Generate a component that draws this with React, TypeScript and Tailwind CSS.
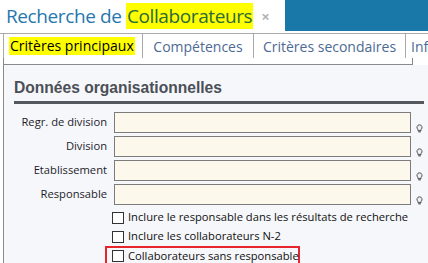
import React from 'react';

const Bulb = () => (
  <svg width="7" height="9" viewBox="0 0 7 9" className="shrink-0">
    <path d="M3.5 0.8a2.6 2.6 0 0 0-1.6 4.6v1.2h3.2V5.4A2.6 2.6 0 0 0 3.5 0.8z" fill="#f0f0f0" stroke="#555" strokeWidth="1" />
    <rect x="2.2" y="7.2" width="2.6" height="1.2" fill="#555" />
  </svg>
);

const fields = ['Regr. de division', 'Division', 'Etablissement', 'Responsable'];

const Field = ({ label }: { label: string }) => (
  <div className="flex items-center h-[21px]">
    <div className="w-[106px] text-right text-[11.2px] text-[#1d1d2b] whitespace-nowrap">{label}</div>
    <div className="ml-[7px] w-[297px] h-[21px] bg-[#fdf8ec] border border-[#7c7c7c]" />
    <div className="ml-[5px] self-end">
      <Bulb />
    </div>
  </div>
);

const Check = ({ label, boxed }: { label: string; boxed?: boolean }) => (
  <div
    className={
      boxed
        ? 'flex items-center gap-[4px] h-[20px] ml-[104px] w-[195px] pl-[5px] border-2 border-[#e8242c]'
        : 'flex items-center gap-[4px] h-[19px] ml-[111px]'
    }
  >
    <div className="w-[12px] h-[12px] bg-white border border-[#333] shrink-0" />
    <span className="text-[11.2px] text-[#111] whitespace-nowrap">{label}</span>
  </div>
);

export default function App() {
  return (
    <div className="w-[428px] h-[263px] overflow-hidden bg-white flex flex-col" style={{ fontFamily: '"Open Sans", "Noto Sans", sans-serif' }}>
      <div className="flex h-[33px] shrink-0">
        <div className="w-[285px] shrink-0 flex items-center pl-[6px]">
          <span className="text-[19px] leading-[27px] text-[#2577ad] tracking-[-0.4px]">
            Recherche de <span className="bg-[#ffff00] text-[#2b6a3a] px-[1px]">Collaborateurs</span>
          </span>
          <span className="ml-[8px] text-[15px] text-[#b5b5b5] font-bold">×</span>
        </div>
        <div className="flex-1 h-[31px] bg-[#1978a8]" />
      </div>
      <div className="flex h-[25px] shrink-0 border-t border-[#a9a9a9] overflow-hidden">
        <div className="w-[140px] shrink-0 ml-[3px] border-l border-r border-[#a9a9a9] flex items-center pl-[5px]">
          <span className="bg-[#ffff00] text-[14px] text-black leading-[18px] px-[1px]">Critères principaux</span>
        </div>
        <div className="w-[111px] shrink-0 border-r border-[#a9a9a9] flex items-center justify-center text-[14px] text-[#4c6a93]">Compétences</div>
        <div className="w-[152px] shrink-0 border-r border-[#a9a9a9] flex items-center justify-center text-[14px] text-[#4c6a93]">Critères secondaires</div>
        <div className="w-[60px] shrink-0 flex items-center pl-[5px] text-[14px] text-[#4c6a93] whitespace-nowrap">Infos</div>
      </div>
      <div className="h-[7px] ml-[3px] w-[410px] shrink-0 border-l border-r border-b border-[#8a8a8a]" />
      <div className="flex-1 ml-[3px] border-l border-[#8a8a8a] bg-[#f6f7fa] pl-[10px] pt-[12px]">
        <div className="text-[15.6px] font-bold text-[#4b4f57] leading-[22px]" style={{ fontFamily: '"Liberation Sans", Arial, sans-serif' }}>
          Données organisationnelles
        </div>
        <div className="h-[3px] w-[410px] bg-[#55585e] mt-[2px]" />
        <div className="flex flex-col gap-[3px] mt-[8px] -ml-[13px]">
          {fields.map((f) => (
            <Field key={f} label={f} />
          ))}
        </div>
        <div className="flex flex-col mt-[3px] -ml-[13px]">
          <Check label="Inclure le responsable dans les résultats de recherche" />
          <Check label="Inclure les collaborateurs N-2" />
          <Check label="Collaborateurs sans responsable" boxed />
        </div>
      </div>
    </div>
  );
}
